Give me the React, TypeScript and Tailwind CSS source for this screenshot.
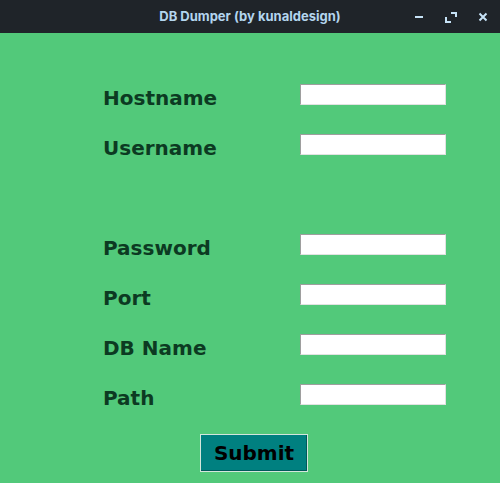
const rows: (string | null)[] = ['Hostname', 'Username', null, 'Password', 'Port', 'DB Name', 'Path']

function TitleBar() {
  return (
    <div className="relative flex h-[33px] items-center justify-center bg-[#1f2429]">
      <span className="font-['Inter',sans-serif] text-[13px] font-bold text-[#b3d5ee]">DB Dumper (by kunaldesign)</span>
      <div className="absolute right-[11px] top-0 flex h-[33px] items-center gap-[20px]">
        <svg width="12" height="12" viewBox="0 0 12 12">
          <rect x="2" y="5" width="8" height="2" fill="#c6e2f6" />
        </svg>
        <svg width="12" height="12" viewBox="0 0 12 12">
          <path d="M6 2h5v4M1 6v5h5" stroke="#c6e2f6" strokeWidth="2" fill="none" />
        </svg>
        <svg width="12" height="12" viewBox="0 0 12 12">
          <path d="M2.5 2.5l7 7M9.5 2.5l-7 7" stroke="#c6e2f6" strokeWidth="2" />
        </svg>
      </div>
    </div>
  )
}

export default function App() {
  return (
    <div className="h-[483px] w-[500px] overflow-hidden bg-[#52c97a] font-['DejaVu_Sans',sans-serif]">
      <TitleBar />
      <div className="pt-[37px]">
        {rows.map((label, i) => (
          <div key={i} className="flex h-[50px] items-center">
            {label && (
              <>
                <span className="ml-[103px] w-[197px] pt-[5px] text-[20px] font-bold leading-[24px] text-[#0c3a22]">
                  {label}
                </span>
                <input
                  type="text"
                  className="mb-[1px] h-[21px] w-[146px] border border-b-[#e2e2e2] border-l-[#9e9e9e] border-r-[#e2e2e2] border-t-[#9e9e9e] bg-white px-1 text-sm outline-none"
                />
              </>
            )}
          </div>
        ))}
        <div className="mt-[14px] flex">
          <button className="ml-[200px] h-[38px] w-[108px] border border-[#d4e6dc] bg-[#008080] text-[20px] font-bold leading-none text-black shadow-[inset_-1px_-1px_0_#005a5a]">
            Submit
          </button>
        </div>
      </div>
    </div>
  )
}
